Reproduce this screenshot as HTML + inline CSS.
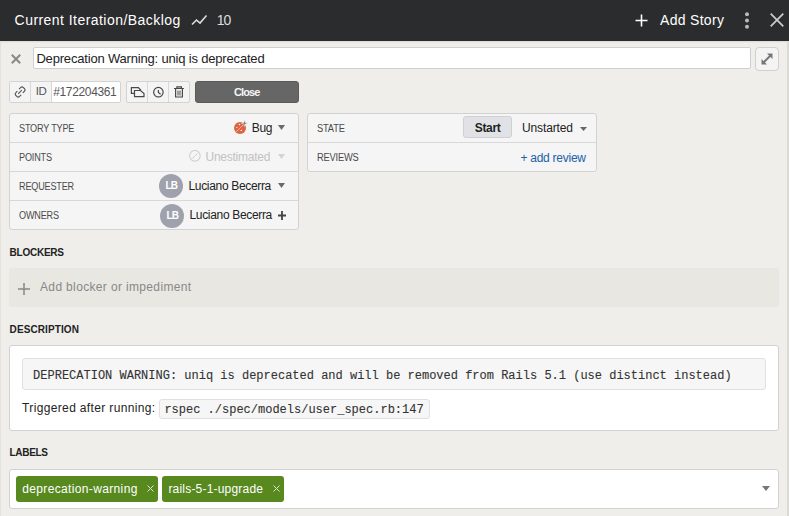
<!DOCTYPE html>
<html><head><meta charset="utf-8"><style>
html,body{margin:0;padding:0;}
body{width:789px;height:516px;overflow:hidden;background:#f0eeea;position:relative;font-family:"Liberation Sans",sans-serif;}
.t{position:absolute;white-space:pre;}
.b{position:absolute;}
</style></head><body>
<div class="b" style="left:0px;top:0px;width:789px;height:41px;background:#2b2c2e"></div>
<div class="b" style="left:0px;top:41px;width:789px;height:2px;background:linear-gradient(#d9d7d2,#f0eeea)"></div>
<div class="b" style="left:787px;top:41px;width:2px;height:475px;background:#dcdad5"></div>
<div class="b" style="left:0px;top:41px;width:1px;height:475px;background:#e4e2dd"></div>
<div class="t" style="left:14.6px;top:12.75px;font-size:14px;line-height:14px;color:#fff;font-weight:400;letter-spacing:0.45px;font-family:'Liberation Sans', sans-serif;">Current Iteration/Backlog</div>
<svg class="b" style="left:191px;top:14px" width="17" height="12" viewBox="0 0 17 12"><polyline points="1,10.5 5.5,6 9,9 15.5,1.5" fill="none" stroke="#ddd" stroke-width="1.6"/></svg>
<div class="t" style="left:216.8px;top:12.65px;font-size:14px;line-height:14px;color:#ddd;font-weight:400;letter-spacing:-1px;font-family:'Liberation Sans', sans-serif;">10</div>
<svg class="b" style="left:635px;top:14px" width="13" height="13" viewBox="0 0 13 13"><path d="M6.5 0.5V12.5M0.5 6.5H12.5" stroke="#fff" stroke-width="1.6"/></svg>
<div class="t" style="left:660px;top:13.45px;font-size:14px;line-height:14px;color:#fff;font-weight:400;letter-spacing:0.3px;font-family:'Liberation Sans', sans-serif;">Add Story</div>
<svg class="b" style="left:744px;top:12px" width="6" height="17" viewBox="0 0 6 17"><circle cx="3" cy="2.2" r="2" fill="#bbb"/><circle cx="3" cy="8.5" r="2" fill="#bbb"/><circle cx="3" cy="14.8" r="2" fill="#bbb"/></svg>
<svg class="b" style="left:770px;top:12.5px" width="14" height="14" viewBox="0 0 14 14"><path d="M0.7 0.7L13.3 13.3M13.3 0.7L0.7 13.3" stroke="#ccc" stroke-width="1.7"/></svg>
<svg class="b" style="left:11px;top:54px" width="10" height="10" viewBox="0 0 10 10"><path d="M0.8 0.8L9.2 9.2M9.2 0.8L0.8 9.2" stroke="#888" stroke-width="2"/></svg>
<div class="b" style="left:33px;top:47px;width:718px;height:22px;background:#fff;border:1px solid #cfcfcf;box-sizing:border-box;border-radius:2px"></div>
<div class="t" style="left:36.4px;top:51.80px;font-size:13px;line-height:13px;color:#222;font-weight:400;letter-spacing:-0.18px;font-family:'Liberation Sans', sans-serif;">Deprecation Warning: uniq is deprecated</div>
<div class="b" style="left:755px;top:47px;width:24px;height:24px;background:#f4f4f4;border:1px solid #cfcfcf;box-sizing:border-box;border-radius:4px"></div>
<svg class="b" style="left:760px;top:52px" width="14" height="14" viewBox="0 0 14 14"><path d="M3 11L11 3" stroke="#777" stroke-width="2"/><path d="M7 1.5H12.5V7Z" fill="#777"/><path d="M1.5 7V12.5H7Z" fill="#777"/></svg>
<div class="b" style="left:9px;top:81px;width:112px;height:22px;background:#fff;border:1px solid #d3d3d3;box-sizing:border-box;border-radius:2px"></div>
<div class="b" style="left:10px;top:82px;width:41px;height:20px;background:#f4f4f4"></div>
<div class="b" style="left:30px;top:82px;width:1px;height:20px;background:#d8d8d8"></div>
<div class="b" style="left:51px;top:82px;width:1px;height:20px;background:#d8d8d8"></div>
<svg class="b" style="left:14px;top:86px" width="12" height="12" viewBox="0 0 12 12"><path d="M5 3.2L6.6 1.6a2 2 0 0 1 2.8 0l0.9 0.9a2 2 0 0 1 0 2.8L8.8 6.9M7.2 8.8L5.6 10.4a2 2 0 0 1-2.8 0l-0.9-0.9a2 2 0 0 1 0-2.8L3.4 5.1M4.2 7.8L7.8 4.2" fill="none" stroke="#555" stroke-width="1.1"/></svg>
<div class="t" style="left:35.8px;top:86.47px;font-size:11.5px;line-height:11.5px;color:#555;font-weight:400;letter-spacing:-0.6px;font-family:'Liberation Sans', sans-serif;">ID</div>
<div class="t" style="left:53.2px;top:86.04px;font-size:12px;line-height:12px;color:#555;font-weight:400;letter-spacing:-0.35px;font-family:'Liberation Sans', sans-serif;">#172204361</div>
<div class="b" style="left:126px;top:81px;width:64px;height:22px;background:#f4f4f4;border:1px solid #d3d3d3;box-sizing:border-box;border-radius:2px"></div>
<div class="b" style="left:147px;top:82px;width:1px;height:20px;background:#d8d8d8"></div>
<div class="b" style="left:168px;top:82px;width:1px;height:20px;background:#d8d8d8"></div>
<svg class="b" style="left:126px;top:81px" width="64" height="22" viewBox="0 0 64 22"><g fill="none" stroke="#484848" stroke-width="1.2" stroke-linejoin="miter"><path d="M8.5 12.3H5.4V6.7H12.4L15 9.5"/><path d="M8.5 9.5H14.5L18 12.5V15.7H8.5Z"/><circle cx="32.4" cy="11.2" r="4.75"/><path d="M32.4 9V11.5L34.6 13.3"/><path d="M48 7.5H57.9M50.9 7.3V5.8H55.4V7.3M49.6 8V16H56.4V8"/><path stroke-width="1" d="M52 9.6V14.5M54 9.6V14.5"/></g></svg>
<div class="b" style="left:195px;top:81px;width:104px;height:22px;background:#666;border:1px solid #5a5a5a;box-sizing:border-box;border-radius:3px"></div>
<div class="t" style="left:234px;top:86.79px;font-size:11px;line-height:11px;color:#f4f4f4;font-weight:700;letter-spacing:-0.9px;font-family:'Liberation Sans', sans-serif;">Close</div>
<div class="b" style="left:9px;top:113px;width:290px;height:117px;background:#f5f5f5;border:1px solid #d2d2d2;box-sizing:border-box;border-radius:3px"></div>
<div class="b" style="left:10px;top:142px;width:288px;height:1px;background:#d8d8d8"></div>
<div class="b" style="left:10px;top:171px;width:288px;height:1px;background:#d8d8d8"></div>
<div class="b" style="left:10px;top:200px;width:288px;height:1px;background:#d8d8d8"></div>
<div class="t" style="left:19.1px;top:123.73px;font-size:10px;line-height:10px;color:#4a4a4a;font-weight:400;letter-spacing:-0.2px;font-family:'Liberation Sans', sans-serif;;transform:scaleX(0.91);transform-origin:0 0">STORY TYPE</div>
<div class="t" style="left:19.1px;top:152.73px;font-size:10px;line-height:10px;color:#4a4a4a;font-weight:400;letter-spacing:-0.2px;font-family:'Liberation Sans', sans-serif;;transform:scaleX(0.91);transform-origin:0 0">POINTS</div>
<div class="t" style="left:19.1px;top:181.73px;font-size:10px;line-height:10px;color:#4a4a4a;font-weight:400;letter-spacing:-0.2px;font-family:'Liberation Sans', sans-serif;;transform:scaleX(0.91);transform-origin:0 0">REQUESTER</div>
<div class="t" style="left:19.1px;top:210.73px;font-size:10px;line-height:10px;color:#4a4a4a;font-weight:400;letter-spacing:-0.2px;font-family:'Liberation Sans', sans-serif;;transform:scaleX(0.91);transform-origin:0 0">OWNERS</div>
<svg class="b" style="left:233px;top:119px" width="16" height="16" viewBox="0 0 16 16"><circle cx="7" cy="8.9" r="6" fill="#dc6644"/><path d="M3.1 13L10.1 6" stroke="#fff" stroke-width="0.8" stroke-dasharray="0.9 0.5"/><circle cx="6.5" cy="5.6" r="0.75" fill="#fff"/><circle cx="3.9" cy="8.5" r="0.6" fill="#fff"/><circle cx="8.3" cy="11.4" r="0.7" fill="#fff"/><path d="M11.6 0.9L12.3 3.5L14.9 4.2L12.3 4.9L11.6 7.5L10.9 4.9L8.3 4.2L10.9 3.5Z" fill="#777" stroke="#f5f5f5" stroke-width="0.5"/></svg>
<div class="t" style="left:251.7px;top:122.04px;font-size:12px;line-height:12px;color:#222;font-weight:400;letter-spacing:-0.3px;font-family:'Liberation Sans', sans-serif;">Bug</div>
<svg class="b" style="left:278px;top:125px" width="7" height="5" viewBox="0 0 7 5"><path d="M0 0H7L3.5 5Z" fill="#6a6a6a"/></svg>
<svg class="b" style="left:189px;top:150px" width="13" height="13" viewBox="0 0 13 13"><circle cx="5.9" cy="5.8" r="5.3" fill="none" stroke="#cfcfcf" stroke-width="1.1"/><path d="M3.2 8.6L8.6 3.2" stroke="#cfcfcf" stroke-width="1"/></svg>
<div class="t" style="left:205.5px;top:151.04px;font-size:12px;line-height:12px;color:#c2c2c2;font-weight:400;letter-spacing:-0.25px;font-family:'Liberation Sans', sans-serif;">Unestimated</div>
<svg class="b" style="left:278px;top:154px" width="7" height="5" viewBox="0 0 7 5"><path d="M0 0H7L3.5 5Z" fill="#d4d4d4"/></svg>
<div class="b" style="left:159px;top:174px;width:24px;height:24px;background:#9fa1ad;border-radius:50%"></div>
<div class="t" style="left:165.5px;top:181.34px;font-size:10px;line-height:10px;color:#fff;font-weight:700;letter-spacing:-0.8px;font-family:'Liberation Sans', sans-serif;">LB</div>
<div class="t" style="left:188.5px;top:180.04px;font-size:12px;line-height:12px;color:#222;font-weight:400;letter-spacing:-0.33px;font-family:'Liberation Sans', sans-serif;">Luciano Becerra</div>
<svg class="b" style="left:278px;top:183px" width="7" height="5" viewBox="0 0 7 5"><path d="M0 0H7L3.5 5Z" fill="#6a6a6a"/></svg>
<div class="b" style="left:160px;top:203.5px;width:24px;height:24.0px;background:#9fa1ad;border-radius:50%"></div>
<div class="t" style="left:166.5px;top:210.84px;font-size:10px;line-height:10px;color:#fff;font-weight:700;letter-spacing:-0.8px;font-family:'Liberation Sans', sans-serif;">LB</div>
<div class="t" style="left:189.5px;top:209.04px;font-size:12px;line-height:12px;color:#222;font-weight:400;letter-spacing:-0.33px;font-family:'Liberation Sans', sans-serif;">Luciano Becerra</div>
<svg class="b" style="left:278px;top:210.5px" width="8" height="9" viewBox="0 0 8 9"><path d="M4 0V9M0 4.5H8" stroke="#444" stroke-width="1.8"/></svg>
<div class="b" style="left:307px;top:113px;width:290px;height:59px;background:#f5f5f5;border:1px solid #d2d2d2;box-sizing:border-box;border-radius:3px"></div>
<div class="b" style="left:308px;top:142px;width:288px;height:1px;background:#d8d8d8"></div>
<div class="t" style="left:317px;top:123.73px;font-size:10px;line-height:10px;color:#4a4a4a;font-weight:400;letter-spacing:-0.2px;font-family:'Liberation Sans', sans-serif;;transform:scaleX(0.93);transform-origin:0 0">STATE</div>
<div class="t" style="left:317px;top:152.73px;font-size:10px;line-height:10px;color:#4a4a4a;font-weight:400;letter-spacing:-0.2px;font-family:'Liberation Sans', sans-serif;;transform:scaleX(0.93);transform-origin:0 0">REVIEWS</div>
<div class="b" style="left:463px;top:116px;width:49px;height:22px;background:#e1e2e6;border:1px solid #cfd0d4;box-sizing:border-box;border-radius:3px"></div>
<div class="t" style="left:474.7px;top:121.64px;font-size:12px;line-height:12px;color:#222;font-weight:700;letter-spacing:-0.3px;font-family:'Liberation Sans', sans-serif;">Start</div>
<div class="t" style="left:522px;top:122.34px;font-size:12px;line-height:12px;color:#222;font-weight:400;letter-spacing:-0.13px;font-family:'Liberation Sans', sans-serif;">Unstarted</div>
<svg class="b" style="left:580px;top:127px" width="7" height="4" viewBox="0 0 7 4"><path d="M0 0H7L3.5 4Z" fill="#666"/></svg>
<div class="t" style="left:520.4px;top:151.84px;font-size:12px;line-height:12px;color:#2160a8;font-weight:400;letter-spacing:-0.25px;font-family:'Liberation Sans', sans-serif;">+ add review</div>
<div class="t" style="left:9.6px;top:247.53px;font-size:10px;line-height:10px;color:#222;font-weight:700;letter-spacing:-0.25px;font-family:'Liberation Sans', sans-serif;">BLOCKERS</div>
<div class="b" style="left:9px;top:268px;width:770px;height:39px;background:#e8e7e2;border-radius:3px"></div>
<svg class="b" style="left:17.5px;top:282.5px" width="12" height="12" viewBox="0 0 12 12"><path d="M6 0V12M0 6H12" stroke="#888" stroke-width="1.5"/></svg>
<div class="t" style="left:40px;top:281.14px;font-size:12px;line-height:12px;color:#888;font-weight:400;letter-spacing:0.35px;font-family:'Liberation Sans', sans-serif;">Add blocker or impediment</div>
<div class="t" style="left:9.6px;top:324.94px;font-size:10px;line-height:10px;color:#222;font-weight:700;letter-spacing:0.1px;font-family:'Liberation Sans', sans-serif;">DESCRIPTION</div>
<div class="b" style="left:9px;top:345px;width:770px;height:86px;background:#fff;border:1px solid #d2d2d2;box-sizing:border-box;border-radius:3px"></div>
<div class="b" style="left:22px;top:358px;width:744px;height:32px;background:#f6f6f6;border:1px solid #e0e0e0;box-sizing:border-box;border-radius:3px"></div>
<div class="t" style="left:33.1px;top:370.14px;font-size:12px;line-height:12px;color:#333;font-weight:400;letter-spacing:0px;font-family:'Liberation Mono', monospace;-webkit-text-stroke:0.1px #333">DEPRECATION WARNING: uniq is deprecated and will be removed from Rails 5.1 (use distinct instead)</div>
<div class="t" style="left:22.1px;top:402.44px;font-size:12px;line-height:12px;color:#222;font-weight:400;letter-spacing:0.35px;font-family:'Liberation Sans', sans-serif;">Triggered after running:</div>
<div class="b" style="left:159px;top:399px;width:271px;height:20px;background:#f6f6f6;border:1px solid #e0e0e0;box-sizing:border-box;border-radius:3px"></div>
<div class="t" style="left:164.4px;top:404.34px;font-size:12px;line-height:12px;color:#333;font-weight:400;letter-spacing:0px;font-family:'Liberation Mono', monospace;-webkit-text-stroke:0.1px #333">rspec ./spec/models/user_spec.rb:147</div>
<div class="t" style="left:9.5px;top:448.34px;font-size:10px;line-height:10px;color:#222;font-weight:700;letter-spacing:-0.3px;font-family:'Liberation Sans', sans-serif;">LABELS</div>
<div class="b" style="left:9px;top:469px;width:770px;height:40px;background:#fff;border:1px solid #d2d2d2;box-sizing:border-box;border-radius:3px"></div>
<div class="b" style="left:16px;top:476px;width:142px;height:26px;background:#57891f;border-radius:3px"></div>
<div class="t" style="left:22.3px;top:482.94px;font-size:12px;line-height:12px;color:#fff;font-weight:400;letter-spacing:0.35px;font-family:'Liberation Sans', sans-serif;">deprecation-warning</div>
<svg class="b" style="left:146.5px;top:485px" width="7" height="7" viewBox="0 0 7 7"><path d="M0.5 0.5L6.5 6.5M6.5 0.5L0.5 6.5" stroke="#dde6d3" stroke-width="1"/></svg>
<div class="b" style="left:162px;top:476px;width:122px;height:26px;background:#57891f;border-radius:3px"></div>
<div class="t" style="left:168.4px;top:482.94px;font-size:12px;line-height:12px;color:#fff;font-weight:400;letter-spacing:0.2px;font-family:'Liberation Sans', sans-serif;">rails-5-1-upgrade</div>
<svg class="b" style="left:272.5px;top:485px" width="7" height="7" viewBox="0 0 7 7"><path d="M0.5 0.5L6.5 6.5M6.5 0.5L0.5 6.5" stroke="#dde6d3" stroke-width="1"/></svg>
<svg class="b" style="left:762px;top:486px" width="8" height="5" viewBox="0 0 8 5"><path d="M0 0H8L4.0 5Z" fill="#777"/></svg>
</body></html>
